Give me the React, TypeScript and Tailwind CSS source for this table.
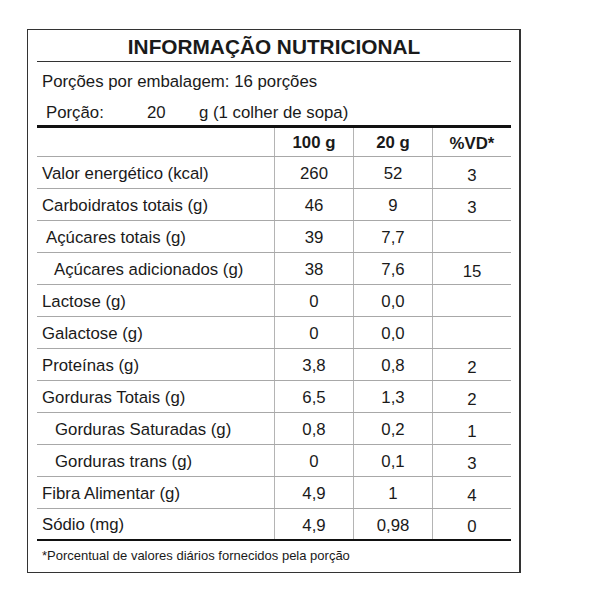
const rows: { label: string; indent: string; a: string; b: string; vd: string }[] = [
  { label: "Valor energético (kcal)", indent: "pl-[5px]", a: "260", b: "52", vd: "3" },
  { label: "Carboidratos totais (g)", indent: "pl-[5px]", a: "46", b: "9", vd: "3" },
  { label: "Açúcares totais (g)", indent: "pl-[9px]", a: "39", b: "7,7", vd: "" },
  { label: "Açúcares adicionados (g)", indent: "pl-[17px]", a: "38", b: "7,6", vd: "15" },
  { label: "Lactose (g)", indent: "pl-[5px]", a: "0", b: "0,0", vd: "" },
  { label: "Galactose (g)", indent: "pl-[5px]", a: "0", b: "0,0", vd: "" },
  { label: "Proteínas (g)", indent: "pl-[5px]", a: "3,8", b: "0,8", vd: "2" },
  { label: "Gorduras Totais (g)", indent: "pl-[5px]", a: "6,5", b: "1,3", vd: "2" },
  { label: "Gorduras Saturadas (g)", indent: "pl-[18px]", a: "0,8", b: "0,2", vd: "1" },
  { label: "Gorduras trans (g)", indent: "pl-[18px]", a: "0", b: "0,1", vd: "3" },
  { label: "Fibra Alimentar (g)", indent: "pl-[5px]", a: "4,9", b: "1", vd: "4" },
  { label: "Sódio (mg)", indent: "pl-[5px]", a: "4,9", b: "0,98", vd: "0" },
];

export default function App() {
  return (
    <div className="min-h-[600px] w-[600px] bg-white pl-[27px] pt-[29px] font-['Liberation_Sans',Arial,sans-serif] text-[#1a1a1a]">
      <div className="w-[494px] border border-r-2 border-[#333] bg-white pl-[9px] pr-[8px]">
        {/* title */}
        <div className="flex h-[32px] items-center justify-center border-b border-[#333] pt-[3px] text-[20.8px] font-bold">
          INFORMAÇÃO NUTRICIONAL
        </div>

        <div className="flex h-[38px] items-center pl-[5px] pt-[2px] text-[16.8px]">
          Porções por embalagem: 16 porções
        </div>
        <div className="flex h-[25px] items-center pl-[9px] pt-[1px] text-[16.8px]">
          <span className="w-[101px]">Porção:</span>
          <span className="w-[52px]">20</span>
          <span>g (1 colher de sopa)</span>
        </div>

        <div className="h-[3px] bg-[#111]" />

        {/* header */}
        <div className="flex h-[29px] border-b border-[#a8a8a8] text-[16.8px] font-bold">
          <div className="w-[237px]" />
          <div className="flex w-[79px] items-center justify-center border-l border-[#b4b4b4] pt-[2px]">100 g</div>
          <div className="flex w-[79px] items-center justify-center border-l border-[#b4b4b4] pt-[2px]">20 g</div>
          <div className="flex w-[79px] items-center justify-center border-l border-[#b4b4b4] pt-[4px]">%VD*</div>
        </div>

        {rows.map((r, i) => (
          <div
            key={r.label}
            className={
              i === rows.length - 1
                ? "flex h-[32px] border-b-2 border-[#111] text-[16.8px]"
                : "flex h-[32px] border-b border-[#a8a8a8] text-[16.8px]"
            }
          >
            <div className={`flex w-[237px] items-center pt-[2px] ${r.indent}`}>{r.label}</div>
            <div className="flex w-[79px] items-center justify-center border-l border-[#b4b4b4] pt-[3px]">{r.a}</div>
            <div className="flex w-[79px] items-center justify-center border-l border-[#b4b4b4] pt-[3px]">{r.b}</div>
            <div className="flex w-[79px] items-center justify-center border-l border-[#b4b4b4] pt-[6px]">{r.vd}</div>
          </div>
        ))}

        <div className="flex h-[31px] items-center pb-[1px] pl-[5px] text-[13px]">
          *Porcentual de valores diários fornecidos pela porção
        </div>
      </div>
    </div>
  );
}
